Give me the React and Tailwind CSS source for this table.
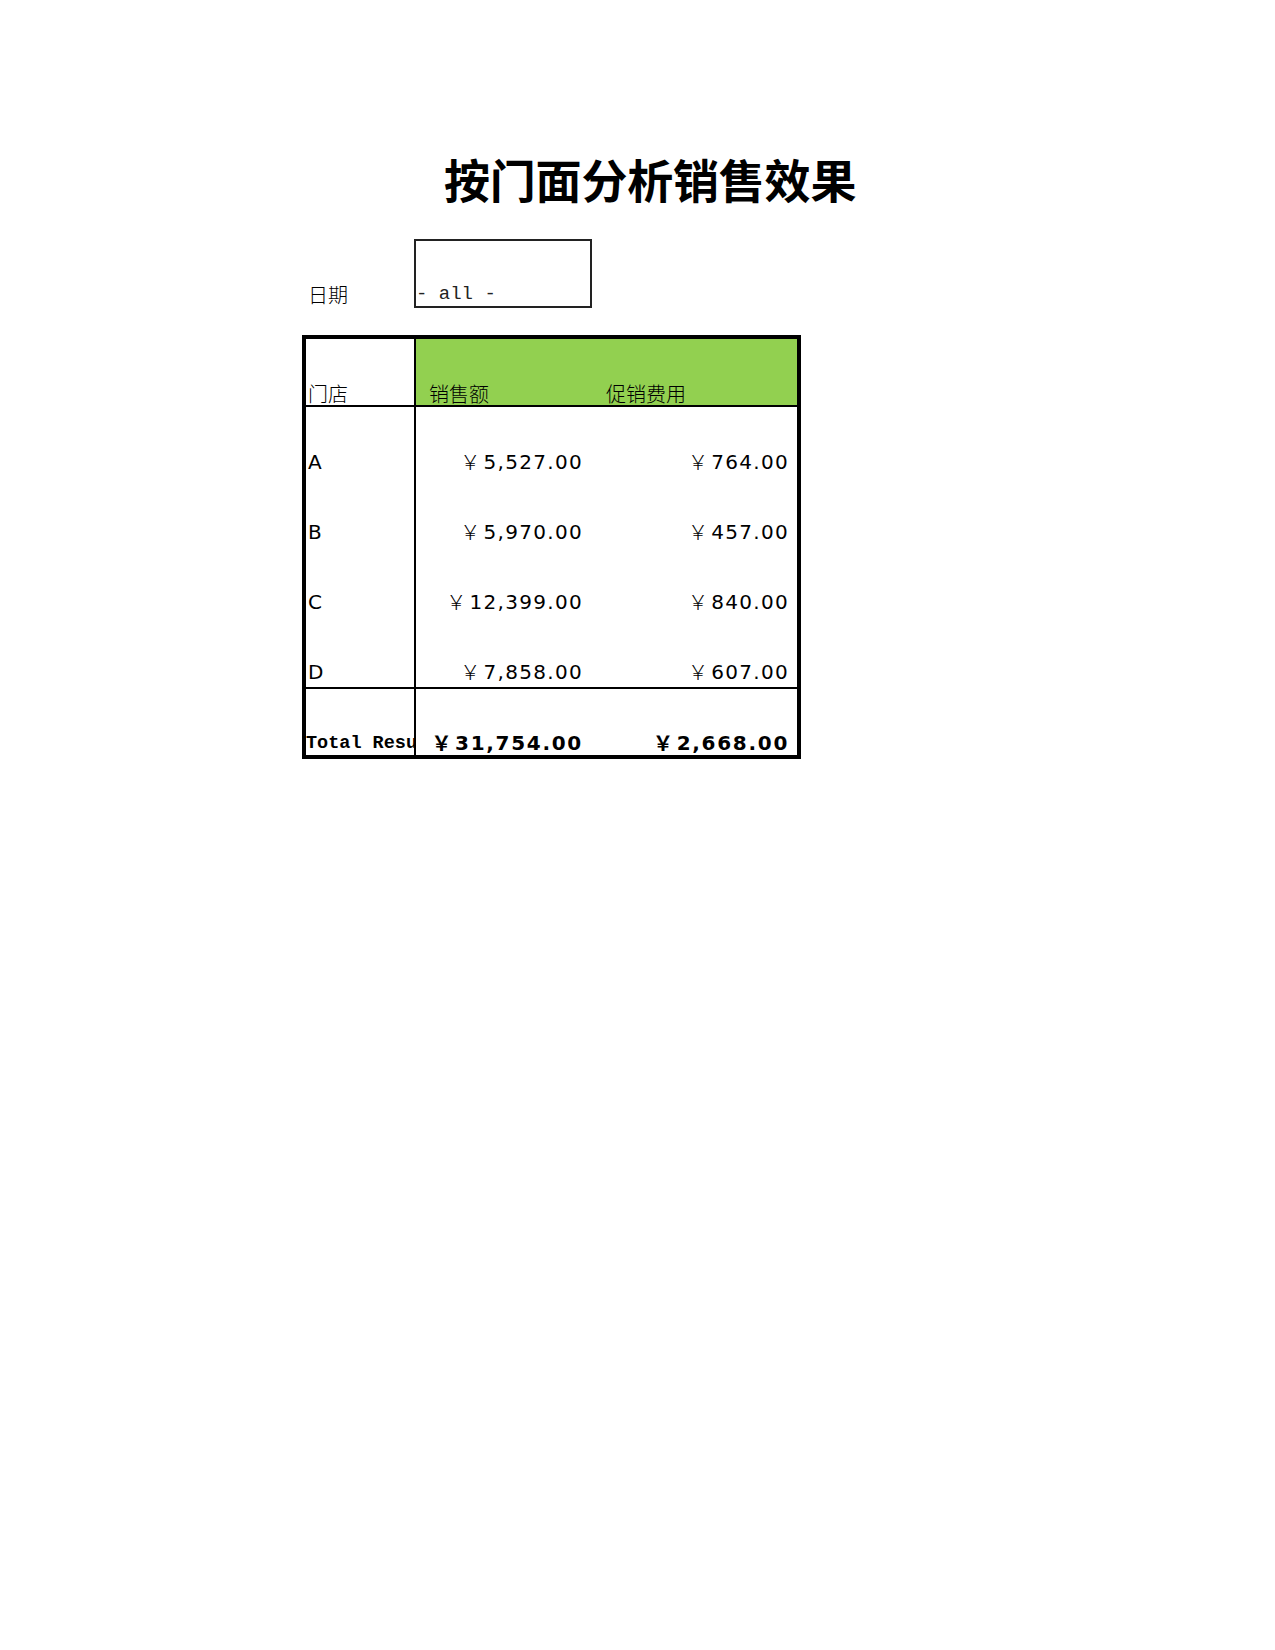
const rows = [
  { store: "A", sales: "5,527.00", promo: "764.00" },
  { store: "B", sales: "5,970.00", promo: "457.00" },
  { store: "C", sales: "12,399.00", promo: "840.00" },
  { store: "D", sales: "7,858.00", promo: "607.00" },
];

const sans = "font-['DejaVu_Sans','Noto_Sans_CJK_SC',sans-serif]";
const cjk = "font-['Noto_Sans_CJK_SC',sans-serif]";
const mono = "font-['Liberation_Mono','Noto_Sans_CJK_SC',monospace]";

// fullwidth yen sign, taken from the CJK face like the sheet does
const Yen = ({ bold }) => (
  <span className={`${cjk} ${bold ? "font-bold" : "font-light"} mr-[2px]`}>￥</span>
);

const App = () => {
  return (
    <div className="min-h-[1650px] w-[1275px] bg-white text-black">
      <div className="pt-[150px] pl-[444px]">
        <h1 className={`${cjk} text-[46px] font-bold leading-[56px] tracking-[-0.2px]`}>
          按门面分析销售效果
        </h1>
      </div>

      <div className="mt-[33px] pl-[302px]">
        {/* filter row */}
        <div className="flex items-end">
          <div className={`${cjk} w-[112px] pl-[6px] pb-[1px] text-[20px] leading-[24px] font-light`}>
            日期
          </div>
          <div className="flex h-[69px] w-[178px] items-end border-2 border-[#222]">
            <span className={`${mono} pb-[1px] text-[19px] leading-[22px] text-[#222]`}>- all -</span>
          </div>
        </div>

        {/* pivot table */}
        <div className="mt-[27px] w-[499px] border-4 border-black">
          <div className="flex h-[68px] border-b-2 border-black">
            <div className={`${cjk} flex w-[110px] items-end border-r-2 border-black pl-[2px] text-[20px] leading-[22px] font-light`}>
              门店
            </div>
            <div className="flex flex-1 items-end bg-[#92d050]">
              <div className={`${cjk} w-[176px] pl-[13px] text-[20px] leading-[22px] font-light`}>销售额</div>
              <div className={`${cjk} flex-1 pl-[14px] text-[20px] leading-[22px] font-light`}>促销费用</div>
            </div>
          </div>

          {rows.map((r) => (
            <div key={r.store} className="flex h-[70px]">
              <div className={`${sans} flex w-[110px] items-end border-r-2 border-black pl-[2px] pb-[3px] text-[20px] leading-[24px]`}>
                {r.store}
              </div>
              <div className={`${sans} flex w-[176px] items-end justify-end pr-[9px] pb-[3px] text-[20px] leading-[24px] tracking-[1.3px]`}>
                <Yen />
                {r.sales}
              </div>
              <div className={`${sans} flex flex-1 items-end justify-end pr-[8px] pb-[3px] text-[20px] leading-[24px] tracking-[1.3px]`}>
                <Yen />
                {r.promo}
              </div>
            </div>
          ))}

          <div className="flex h-[68px] border-t-2 border-black">
            <div className={`${mono} flex w-[110px] items-end overflow-hidden whitespace-nowrap border-r-2 border-black text-[18.5px] font-bold leading-[22px]`}>
              Total Result
            </div>
            <div className={`${sans} flex w-[176px] items-end justify-end pr-[9px] text-[20px] font-bold leading-[24px] tracking-[1.7px]`}>
              <Yen bold />
              31,754.00
            </div>
            <div className={`${sans} flex flex-1 items-end justify-end pr-[8px] text-[20px] font-bold leading-[24px] tracking-[1.7px]`}>
              <Yen bold />
              2,668.00
            </div>
          </div>
        </div>
      </div>
    </div>
  );
};

export default App;
